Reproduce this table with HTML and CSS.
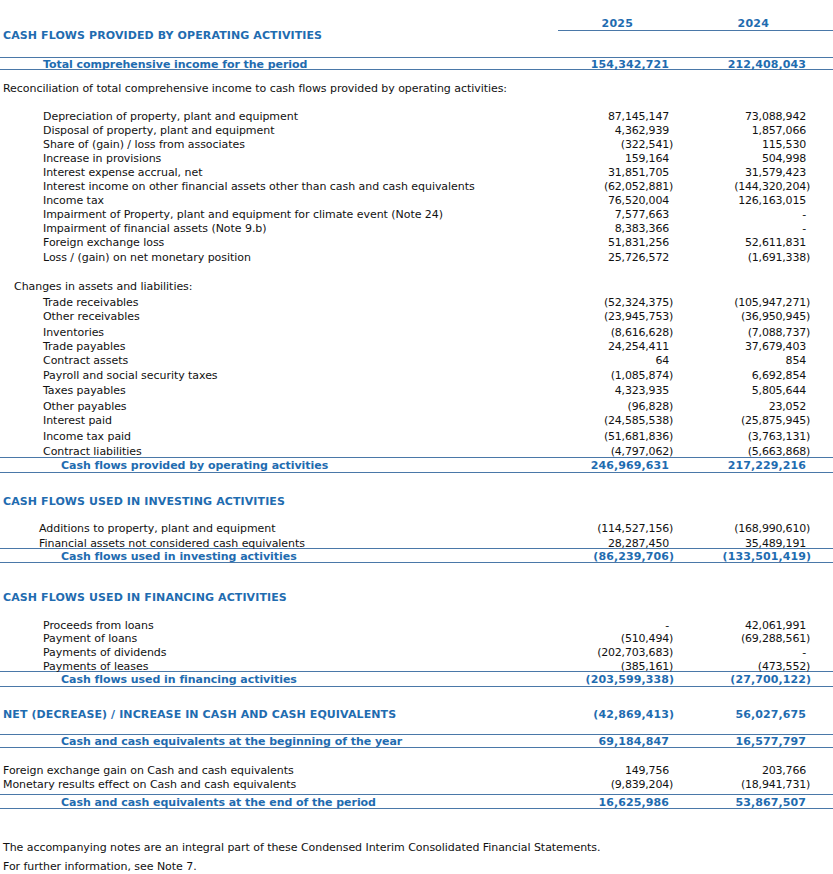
FILE: index.html
```html
<!DOCTYPE html>
<html>
<head>
<meta charset="utf-8">
<link rel="stylesheet" href="styles.css">
</head>
<body>
<div class="sheet">
  <div class="row head h14 mt15">
    <div class="lbl"></div>
    <div class="num">2025</div>
    <div class="num">2024</div>
  </div>
  <div class="row sec top h12"><div class="lbl">CASH FLOWS PROVIDED BY OPERATING ACTIVITIES</div><div></div><div></div></div>

  <div class="row tot mt16 c11"><div class="lbl in1">Total comprehensive income for the period</div><div class="num">154,342,721<span class="p"></span></div><div class="num">212,408,043<span class="p"></span></div></div>

  <div class="row h14 mt10"><div class="lbl">Reconciliation of total comprehensive income to cash flows provided by operating activities:</div><div></div><div></div></div>

  <div class="row h14 mt14"><div class="lbl in1">Depreciation of property, plant and equipment</div><div class="num">87,145,147<span class="p"></span></div><div class="num">73,088,942<span class="p"></span></div></div>
  <div class="row h14"><div class="lbl in1">Disposal of property, plant and equipment</div><div class="num">4,362,939<span class="p"></span></div><div class="num">1,857,066<span class="p"></span></div></div>
  <div class="row h14"><div class="lbl in1">Share of (gain) / loss from associates</div><div class="num">(322,541<span class="p">)</span></div><div class="num">115,530<span class="p"></span></div></div>
  <div class="row h14"><div class="lbl in1">Increase in provisions</div><div class="num">159,164<span class="p"></span></div><div class="num">504,998<span class="p"></span></div></div>
  <div class="row h14"><div class="lbl in1">Interest expense accrual, net</div><div class="num">31,851,705<span class="p"></span></div><div class="num">31,579,423<span class="p"></span></div></div>
  <div class="row h14"><div class="lbl in1">Interest income on other financial assets other than cash and cash equivalents</div><div class="num">(62,052,881<span class="p">)</span></div><div class="num">(144,320,204<span class="p">)</span></div></div>
  <div class="row h14"><div class="lbl in1">Income tax</div><div class="num">76,520,004<span class="p"></span></div><div class="num">126,163,015<span class="p"></span></div></div>
  <div class="row h14"><div class="lbl in1">Impairment of Property, plant and equipment for climate event (Note 24)</div><div class="num">7,577,663<span class="p"></span></div><div class="num">-<span class="p"></span></div></div>
  <div class="row h14"><div class="lbl in1">Impairment of financial assets (Note 9.b)</div><div class="num">8,383,366<span class="p"></span></div><div class="num">-<span class="p"></span></div></div>
  <div class="row h14"><div class="lbl in1">Foreign exchange loss</div><div class="num">51,831,256<span class="p"></span></div><div class="num">52,611,831<span class="p"></span></div></div>
  <div class="row h14 mt1"><div class="lbl in1">Loss / (gain) on net monetary position</div><div class="num">25,726,572<span class="p"></span></div><div class="num">(1,691,338<span class="p">)</span></div></div>

  <div class="row h14 mt15"><div class="lbl in0">Changes in assets and liabilities:</div><div></div><div></div></div>
  <div class="row h14 mt2"><div class="lbl in1">Trade receivables</div><div class="num">(52,324,375<span class="p">)</span></div><div class="num">(105,947,271<span class="p">)</span></div></div>
  <div class="row h14"><div class="lbl in1">Other receivables</div><div class="num">(23,945,753<span class="p">)</span></div><div class="num">(36,950,945<span class="p">)</span></div></div>
  <div class="row h14 mt2"><div class="lbl in1">Inventories</div><div class="num">(8,616,628<span class="p">)</span></div><div class="num">(7,088,737<span class="p">)</span></div></div>
  <div class="row h14"><div class="lbl in1">Trade payables</div><div class="num">24,254,411<span class="p"></span></div><div class="num">37,679,403<span class="p"></span></div></div>
  <div class="row h14"><div class="lbl in1">Contract assets</div><div class="num">64<span class="p"></span></div><div class="num">854<span class="p"></span></div></div>
  <div class="row h14 mt1"><div class="lbl in1">Payroll and social security taxes</div><div class="num">(1,085,874<span class="p">)</span></div><div class="num">6,692,854<span class="p"></span></div></div>
  <div class="row h14 mt1"><div class="lbl in1">Taxes payables</div><div class="num">4,323,935<span class="p"></span></div><div class="num">5,805,644<span class="p"></span></div></div>
  <div class="row h14 mt2"><div class="lbl in1">Other payables</div><div class="num">(96,828<span class="p">)</span></div><div class="num">23,052<span class="p"></span></div></div>
  <div class="row h14"><div class="lbl in1">Interest paid</div><div class="num">(24,585,538<span class="p">)</span></div><div class="num">(25,875,945<span class="p">)</span></div></div>
  <div class="row h14 mt2"><div class="lbl in1">Income tax paid</div><div class="num">(51,681,836<span class="p">)</span></div><div class="num">(3,763,131<span class="p">)</span></div></div>
  <div class="row h14 mt1"><div class="lbl in1">Contract liabilities</div><div class="num">(4,797,062<span class="p">)</span></div><div class="num">(5,663,868<span class="p">)</span></div></div>
  <div class="row tot c14"><div class="lbl in2">Cash flows provided by operating activities</div><div class="num">246,969,631<span class="p"></span></div><div class="num">217,229,216<span class="p"></span></div></div>

  <div class="row sec h14 mt20"><div class="lbl">CASH FLOWS USED IN INVESTING ACTIVITIES</div><div></div><div></div></div>
  <div class="row h14 mt13"><div class="lbl in1b">Additions to property, plant and equipment</div><div class="num">(114,527,156<span class="p">)</span></div><div class="num">(168,990,610<span class="p">)</span></div></div>
  <div class="row h13 mt1"><div class="lbl in1b">Financial assets not considered cash equivalents</div><div class="num">28,287,450<span class="p"></span></div><div class="num">35,489,191<span class="p"></span></div></div>
  <div class="row tot c13"><div class="lbl in2">Cash flows used in investing activities</div><div class="num">(86,239,706<span class="p">)</span></div><div class="num">(133,501,419<span class="p">)</span></div></div>

  <div class="row sec h14 mt26"><div class="lbl">CASH FLOWS USED IN FINANCING ACTIVITIES</div><div></div><div></div></div>
  <div class="row h13 mt14"><div class="lbl in1">Proceeds from loans</div><div class="num">-<span class="p"></span></div><div class="num">42,061,991<span class="p"></span></div></div>
  <div class="row h14"><div class="lbl in1">Payment of loans</div><div class="num">(510,494<span class="p">)</span></div><div class="num">(69,288,561<span class="p">)</span></div></div>
  <div class="row h14"><div class="lbl in1">Payments of dividends</div><div class="num">(202,703,683<span class="p">)</span></div><div class="num">-<span class="p"></span></div></div>
  <div class="row h13"><div class="lbl in1">Payments of leases</div><div class="num">(385,161<span class="p">)</span></div><div class="num">(473,552<span class="p">)</span></div></div>
  <div class="row tot c14"><div class="lbl in2">Cash flows used in financing activities</div><div class="num">(203,599,338<span class="p">)</span></div><div class="num">(27,700,122<span class="p">)</span></div></div>

  <div class="row sec h14 mt19"><div class="lbl">NET (DECREASE) / INCREASE IN CASH AND CASH EQUIVALENTS</div><div class="num">(42,869,413<span class="p">)</span></div><div class="num">56,027,675<span class="p"></span></div></div>

  <div class="row tot c12 mt14"><div class="lbl in2">Cash and cash equivalents at the beginning of the year</div><div class="num">69,184,847<span class="p"></span></div><div class="num">16,577,797<span class="p"></span></div></div>

  <div class="row h14 mt14"><div class="lbl">Foreign exchange gain on Cash and cash equivalents</div><div class="num">149,756<span class="p"></span></div><div class="num">203,766<span class="p"></span></div></div>
  <div class="row h13"><div class="lbl">Monetary results effect on Cash and cash equivalents</div><div class="num">(9,839,204<span class="p">)</span></div><div class="num">(18,941,731<span class="p">)</span></div></div>
  <div class="row tot c13 mt5"><div class="lbl in2">Cash and cash equivalents at the end of the period</div><div class="num">16,625,986<span class="p"></span></div><div class="num">53,867,507<span class="p"></span></div></div>

  <p class="note first">The accompanying notes are an integral part of these Condensed Interim Consolidated Financial Statements.</p>
  <p class="note second">For further information, see Note 7.</p>
</div>
</body>
</html>
```

FILE: styles.css
```css
html, body {
  margin: 0;
  padding: 0;
  background: #ffffff;
}

.sheet {
  width: 833px;
  font-family: "DejaVu Sans", Verdana, sans-serif;
  font-size: 11px;
  color: #111111;
}

.row {
  display: grid;
  grid-template-columns: 558px 137px 138px;
  align-items: center;
  white-space: nowrap;
  letter-spacing: -0.05px;
}

.row > div {
  box-sizing: border-box;
  height: 100%;
  padding-top: 2px;
  display: flex;
  align-items: center;
}

.lbl {
  padding-left: 3px;
}

.in0 { padding-left: 14px; }
.in1 { padding-left: 43px; }
.in1b { padding-left: 39px; }
.in2 { padding-left: 61px; }

.num {
  justify-content: flex-end;
  letter-spacing: -0.2px;
}

.row > .num:nth-child(2) { padding-right: 26px; }
.row > .num:nth-child(3) { padding-right: 27px; }

.p {
  display: inline-block;
  width: 0;
  overflow: visible;
}

.head .num {
  font-weight: bold;
  color: #1f6cb0;
  border-bottom: 1px solid #4a78a8;
  letter-spacing: 0.2px;
  padding-top: 2px;
}

.head .num:nth-child(2) { padding-right: 62px; }
.head .num:nth-child(3) { padding-right: 64px; }

.sec {
  font-weight: bold;
  color: #1f6cb0;
  letter-spacing: 0.1px;
}

.sec.top > div { padding-top: 0; }

.tot {
  font-weight: bold;
  color: #1f6cb0;
  border-top: 1px solid #4a78a8;
  border-bottom: 1px solid #4a78a8;
  letter-spacing: -0.05px;
}

.tot > div { padding-top: 1px; }
.tot.c11 > div, .tot.c12 > div { padding-top: 0; }

.tot .num, .sec .num { letter-spacing: 0.1px; }

.h12 { height: 12px; }
.h13 { height: 13px; }
.h14 { height: 14px; }
.c11 { height: 11px; }
.c12 { height: 12px; }
.c13 { height: 13px; }
.c14 { height: 14px; }

.mt1 { margin-top: 1px; }
.mt2 { margin-top: 2px; }
.mt5 { margin-top: 5px; }
.mt10 { margin-top: 10px; }
.mt13 { margin-top: 13px; }
.mt14 { margin-top: 14px; }
.mt15 { margin-top: 15px; }
.mt16 { margin-top: 16px; }
.mt19 { margin-top: 19px; }
.mt20 { margin-top: 20px; }
.mt26 { margin-top: 26px; }

.note {
  margin: 0 0 0 3px;
  line-height: 14px;
  color: #111111;
  letter-spacing: -0.05px;
}

.note.first { margin-top: 32px; }
.note.second { margin-top: 5px; }
```
